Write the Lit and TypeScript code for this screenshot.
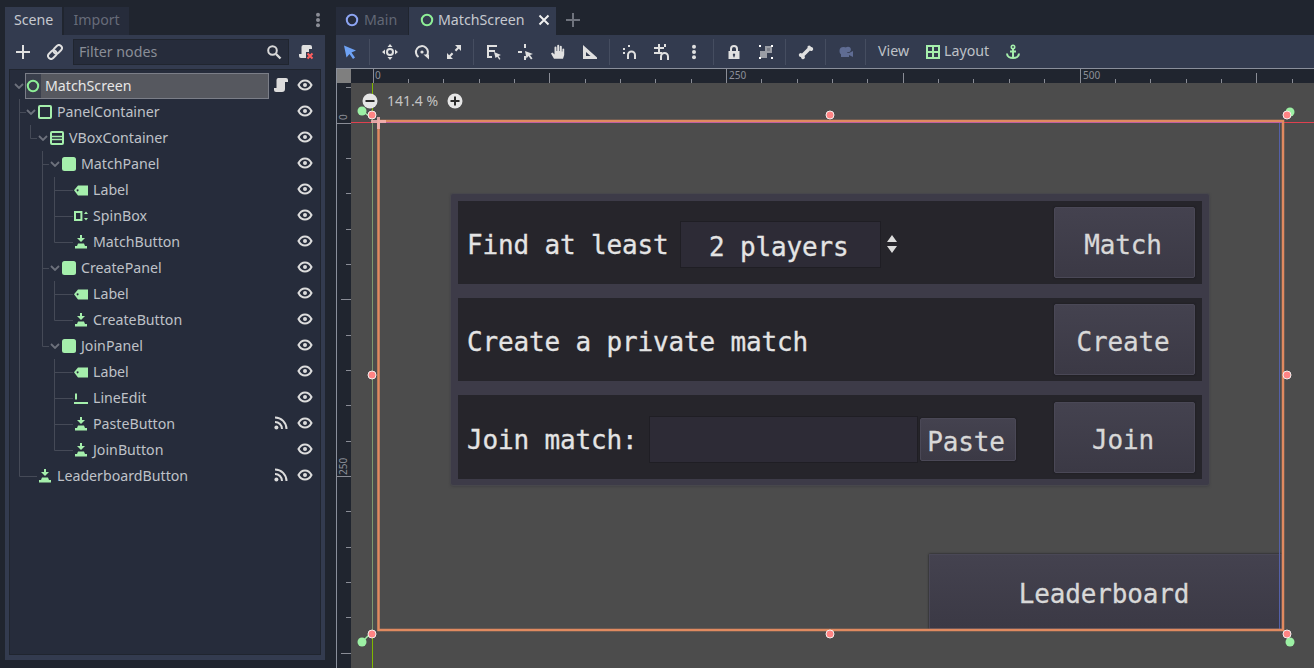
import { LitElement, css, html, svg } from "lit";
import { customElement } from "lit/decorators.js";

// icons are all on a 16x16 grid, colour comes from currentColor
const icons: Record<string, unknown> = {
  ring: svg`<circle cx="8" cy="8" r="5.2" fill="none" stroke="currentColor" stroke-width="2"/>`,
  box: svg`<rect x="2" y="2" width="12" height="12" rx="1" fill="none" stroke="currentColor" stroke-width="2"/>`,
  vbox: svg`<rect x="2" y="2" width="12" height="12" rx="1" fill="none" stroke="currentColor" stroke-width="2"/><path d="M2 6.500h12M2 9.500h12" stroke="currentColor" stroke-width="1.600"/>`,
  panel: svg`<rect x="1" y="1" width="14" height="14" rx="2.500" fill="currentColor"/>`,
  label: svg`<path fill-rule="evenodd" fill="currentColor" d="M1 8.200 5 3.500h10v10H5zM4.600 7.300a1 1 0 1 0 .01 0z"/>`,
  spin: svg`<rect x="2" y="4" width="6.400" height="8" fill="none" stroke="currentColor" stroke-width="2"/><path fill="currentColor" d="M13 3.500l2 2.500h-4zM13 12.500l-2-2.500h4z"/>`,
  edit: svg`<path fill="currentColor" d="M2 3.500h2v6H2zM1 12h14v2H1z"/>`,
  button: svg`<path fill="currentColor" d="M7 1h2v3h3L8 8 4 4h3zM5 9.500h6l1 2.500h2v2.500H2V12h2z"/>`,
  eye: svg`<path fill="none" stroke="currentColor" stroke-width="2" d="M1.500 8C3 5 5.300 3.400 8 3.400S13 5 14.500 8C13 11 10.700 12.600 8 12.600S3 11 1.500 8Z"/><circle cx="8" cy="8" r="2" fill="currentColor"/>`,
  signal: svg`<circle cx="3.400" cy="12.600" r="2" fill="currentColor"/><path fill="none" stroke="currentColor" stroke-width="2" d="M2 7a7 7 0 0 1 7 7M2 2.500A11.500 11.500 0 0 1 13.500 14"/>`,
  script: svg`<path fill="currentColor" d="M5 1h8a2 2 0 0 1 2 2v2h-3v7a3 3 0 0 1-3 3H3a2 2 0 0 1-2-2v-2h2.500V3A2 2 0 0 1 5 1z"/>`,
  scriptX: svg`<path fill="currentColor" d="M5 1h7a2 2 0 0 1 2 2v2h-3v3H8v6H3a2 2 0 0 1-2-2v-2h2.500V3A2 2 0 0 1 5 1z"/><path stroke="#ff5f5f" stroke-width="2" d="M9.500 9.500l5 5M14.500 9.500l-5 5"/>`,
  plus: svg`<path fill="currentColor" d="M7 1h2v6h6v2H9v6H7V9H1V7h6z"/>`,
  link: svg`<g transform="rotate(-45 8 8)" fill="none" stroke="currentColor" stroke-width="1.900"><rect x="-0.500" y="5" width="9.500" height="6" rx="3"/><rect x="7" y="5" width="9.500" height="6" rx="3"/></g>`,
  search: svg`<circle cx="6.500" cy="6.500" r="4.300" fill="none" stroke="currentColor" stroke-width="2"/><path stroke="currentColor" stroke-width="2.400" d="M10 10l4.500 4.500"/>`,
  select: svg`<path fill="currentColor" d="M2 1.500l12 5-4.500 2 3.500 5-2 1.500-3.500-5L4.500 13.500z"/>`,
  move: svg`<path fill="currentColor" d="M8 0l2.500 3h-5zM8 16l-2.500-3h5zM0 8l3-2.500v5zM16 8l-3 2.500v-5z"/><circle cx="8" cy="8" r="3" fill="none" stroke="currentColor" stroke-width="2"/>`,
  rotate: svg`<path fill="none" stroke="currentColor" stroke-width="2" d="M4.500 13A6 6 0 1 1 12.500 12"/><circle cx="8" cy="8" r="1.600" fill="currentColor"/><path fill="currentColor" d="M9.500 10.500h5.500v5z"/>`,
  scale: svg`<path fill="currentColor" d="M9 1h6v6l-2.200-2.200-2.600 2.600-1.500-1.500 2.600-2.600zM7 15H1V9l2.200 2.200 2.600-2.600 1.500 1.500-2.600 2.600z"/>`,
  listSelect: svg`<path fill="currentColor" d="M1 1h10v2H3v3h6v2H3v4h3v2H1z"/><path fill="currentColor" d="M8 8l7 3-2.500 1 2 3-1.200.8-2-3L9.500 14z"/>`,
  pivot: svg`<path fill="currentColor" d="M0 7h4v2H0zM6 0h2v4H6zM6 12h2v4H6z"/><path fill="currentColor" d="M7 7l8 3-3 1 2.500 3.500-1.500 1-2.500-3.500-2 2.500z"/>`,
  hand: svg`<path fill="currentColor" d="M4 14.800L1 9.500l1.500-1 2 2V3.500a1 1 0 0 1 2 0V7h.7V1.800a1 1 0 0 1 2 0V7h.6V2.800a1 1 0 0 1 2 0V7.500h.6V5a1 1 0 0 1 1.800 0V11l-1.200 3.800z"/>`,
  triangle: svg`<path fill-rule="evenodd" fill="currentColor" d="M1 1l14 12.500V15H1zM4 8v4h4.500z"/>`,
  snap: svg`<path fill="none" stroke="currentColor" stroke-width="2" d="M6 15v-4a3.500 3.500 0 0 1 7 0v4"/><path fill="currentColor" d="M1 4h2v2H1zM6 1h2v2H6zM1 8h2v2H1z"/>`,
  gridSnap: svg`<path fill="currentColor" d="M4 0h2v9H4zM0 3h10v2H0zM0 8h8v2H0zM10 0h2v3h-2z"/><path fill="none" stroke="currentColor" stroke-width="2" d="M7 16v-3.500a3.500 3.500 0 0 1 7 0V16"/>`,
  dots: svg`<circle cx="8" cy="2.800" r="2" fill="currentColor"/><circle cx="8" cy="8" r="2" fill="currentColor"/><circle cx="8" cy="13.200" r="2" fill="currentColor"/>`,
  lock: svg`<path fill="currentColor" fill-rule="evenodd" d="M4 7V5a4 4 0 0 1 8 0v2h1.500v8h-11V7zM6 7h4V5a2 2 0 0 0-4 0zM8 9.500a1.300 1.300 0 0 0-.6 2.400v1.300h1.200v-1.300A1.300 1.300 0 0 0 8 9.500z"/>`,
  group: svg`<path fill="#9a9da5" d="M2 7h7v7H2zM7 2h7v7H9V7H7z"/><path fill="#7b7e88" d="M9 4h3v3H9z"/><path fill="#fff" d="M1 1h2v2H1zM13 1h2v2h-2zM1 13h2v2H1zM13 13h2v2h-2z"/>`,
  bone: svg`<path fill="currentColor" d="M11 1.500a2 2 0 0 1 2 1.500 2 2 0 0 1 1.500 3.500 2 2 0 0 1-2.500 0L6.500 12a2 2 0 0 1 0 2.500A2 2 0 0 1 3 13a2 2 0 0 1-1.500-3.500 2 2 0 0 1 2.500 0L9.500 4a2 2 0 0 1 1.500-2.500z"/>`,
  camera: svg`<circle cx="5.500" cy="7" r="4" fill="currentColor"/><circle cx="10" cy="5.500" r="2.800" fill="currentColor"/><path fill="currentColor" d="M3 9h8v4H3zM11 9l4-2v6l-4-2z"/>`,
  layout: svg`<path fill-rule="evenodd" fill="currentColor" d="M1 1h14v14H1zM3 3v4h4V3zM9 3v4h4V3zM3 9v4h4V9zM9 9v4h4V9z"/>`,
  anchor: svg`<circle cx="8" cy="3" r="1.700" fill="none" stroke="currentColor" stroke-width="1.600"/><path fill="none" stroke="currentColor" stroke-width="2" d="M8 5v9M5 7.500h6M2 9.500c0 3 3 4.500 6 4.500s6-1.500 6-4.500"/>`,
  minus: svg`<circle cx="8" cy="8" r="7.500" fill="#e6e6e6"/><path d="M3.500 7h9v2h-9z" fill="#2b2b2b"/>`,
  zoomIn: svg`<circle cx="8" cy="8" r="7.500" fill="#e6e6e6"/><path d="M7 3.500h2V7h3.500v2H9v3.500H7V9H3.500V7H7z" fill="#2b2b2b"/>`,
  close: svg`<path stroke="currentColor" stroke-width="2.600" d="M2 2l12 12M14 2L2 14"/>`,
  plusThin: svg`<path stroke="currentColor" stroke-width="2" d="M8 1v14M1 8h14"/>`,
};

const icon = (name: string, size = 16) =>
  html`<svg class="ico" width=${size} height=${size} viewBox="0 0 16 16">${icons[name]}</svg>`;

interface TreeRow {
  depth: number;
  name: string;
  icon: string;
  open?: boolean;
  signal?: boolean;
}

const rows: TreeRow[] = [
  { depth: 0, name: "MatchScreen", icon: "ring", open: true },
  { depth: 1, name: "PanelContainer", icon: "box", open: true },
  { depth: 2, name: "VBoxContainer", icon: "vbox", open: true },
  { depth: 3, name: "MatchPanel", icon: "panel", open: true },
  { depth: 4, name: "Label", icon: "label" },
  { depth: 4, name: "SpinBox", icon: "spin" },
  { depth: 4, name: "MatchButton", icon: "button" },
  { depth: 3, name: "CreatePanel", icon: "panel", open: true },
  { depth: 4, name: "Label", icon: "label" },
  { depth: 4, name: "CreateButton", icon: "button" },
  { depth: 3, name: "JoinPanel", icon: "panel", open: true },
  { depth: 4, name: "Label", icon: "label" },
  { depth: 4, name: "LineEdit", icon: "edit" },
  { depth: 4, name: "PasteButton", icon: "button", signal: true },
  { depth: 4, name: "JoinButton", icon: "button" },
  { depth: 1, name: "LeaderboardButton", icon: "button", signal: true },
];

// connector lines of the tree, in page coordinates
const treeLines = [
  "M19.500 99V476.500H37",
  "M19.500 112.500H26",
  "M30.500 125V138.500H37",
  "M42.500 151V346.500H49",
  "M42.500 164.500H49",
  "M42.500 268.500H49",
  "M54.500 177V242.500H73",
  "M54.500 190.500H73",
  "M54.500 216.500H73",
  "M54.500 281V320.500H73",
  "M54.500 294.500H73",
  "M54.500 359V450.500H73",
  "M54.500 372.500H73",
  "M54.500 398.500H73",
  "M54.500 424.500H73",
];

const tools: (string | null)[] = [
  "select", null, "move", "rotate", "scale", null, "listSelect", "pivot", "hand", "triangle", null,
  "snap", "gridSnap", "dots", null, "lock", "group", null, "bone", null, "camera", null,
];

const UNIT = 35.35;
const ticks = (from: number, to: number) => {
  const out: { at: number; kind: number }[] = [];
  for (let i = Math.ceil((from - 372) / UNIT); 372 + i * UNIT < to; i++) {
    const m = ((i % 10) + 10) % 10;
    out.push({ at: Math.round(372.5 + i * UNIT), kind: m === 0 ? 2 : m === 5 ? 1 : 0 });
  }
  return out;
};

@customElement("app-root")
export class AppRoot extends LitElement {
  static styles = css`
    :host {
      display: block;
      width: 1314px;
      height: 668px;
      overflow: hidden;
      background: #20252f;
      font-family: "Noto Sans", sans-serif;
      font-size: 14.2px;
      color: #bfc2c8;
    }
    .ico {
      display: block;
      flex: none;
    }
    .app {
      display: flex;
      height: 668px;
    }
    /* scene dock */
    .dock {
      width: 320px;
      margin: 7px 11px 8px 5px;
      display: flex;
      flex-direction: column;
      position: relative;
    }
    .tabs {
      display: flex;
      height: 28px;
      align-items: stretch;
      gap: 2px;
    }
    .tab {
      display: flex;
      align-items: center;
      padding: 0 9px 3px;
      background: #262c3b;
      color: #666b79;
    }
    .tab.on {
      background: #333b4f;
      color: #c6c9cf;
    }
    .tabs .more {
      margin-left: auto;
      margin-right: -1px;
      align-self: center;
      color: #8a8d96;
      margin-bottom: 2px;
    }
    .dock-body {
      flex: 1;
      background: #333b4f;
      display: flex;
      flex-direction: column;
      padding: 0 4px 5px;
    }
    .dock-tools {
      height: 34px;
      display: flex;
      align-items: center;
      color: #e0e0e0;
      flex: none;
    }
    .dock-tools .add {
      margin-left: 6px;
    }
    .dock-tools .link {
      margin-left: 16px;
    }
    .filter {
      margin-left: 10px;
      width: 216px;
      height: 26px;
      box-sizing: border-box;
      background: #262c3b;
      border: 1px solid #20252f;
      display: flex;
      align-items: center;
      justify-content: space-between;
      padding: 0 6px 0 5px;
      color: #8a8e97;
    }
    .filter span {
      margin-top: -2px;
    }
    .filter .ico {
      color: #d8d8d8;
    }
    .dock-tools .clear {
      margin-left: 9px;
    }
    .tree {
      flex: 1;
      background: #262c3b;
      border: 1px solid #20252f;
      box-sizing: border-box;
      padding-top: 3px;
      position: relative;
    }
    .tree-lines {
      position: absolute;
      left: -10px;
      top: -70px;
      pointer-events: none;
    }
    .row {
      height: 26px;
      display: flex;
      align-items: center;
      position: relative;
    }
    .chev {
      position: absolute;
      top: 10px;
      color: #6d717c;
    }
    .node-ico {
      position: absolute;
      color: #a5efac;
      top: 5px;
    }
    .row.root .node-ico {
      color: #8eef97;
    }
    .name {
      position: absolute;
      top: 2px;
      line-height: 22px;
      white-space: nowrap;
    }
    .row.root .name {
      color: #e6e6e6;
    }
    .sel {
      position: absolute;
      left: 15px;
      top: 0;
      width: 244px;
      height: 26px;
      box-sizing: border-box;
      border: 1px solid #7b7e88;
      background: linear-gradient(to right, #3a3f4c 15px, #56585f 15px);
    }
    .side {
      position: absolute;
      top: 4px;
      color: #dcdcdc;
    }
    .side.eye {
      left: 287px;
    }
    .side.extra {
      left: 263px;
    }
    /* main column */
    .main {
      flex: 1;
      min-width: 0;
      display: flex;
      flex-direction: column;
    }
    .doc-tabs {
      height: 28px;
      margin-top: 7px;
      display: flex;
      align-items: stretch;
      flex: none;
    }
    .doc-tab {
      display: flex;
      align-items: center;
      gap: 4px;
      padding: 0 8px 3px;
      background: #262c3b;
      color: #626775;
      width: 72px;
      box-sizing: border-box;
    }
    .doc-tab .ico {
      color: #8da5f3;
    }
    .doc-tab.on {
      background: #333b4f;
      color: #c6c9cf;
      width: 147px;
      margin-left: 1px;
      gap: 3px;
      padding: 0 6px 3px 10px;
    }
    .doc-tab.on .ico {
      color: #8eef97;
    }
    .doc-tab.on .x {
      margin-left: auto;
    }
    .doc-tab.on .x .ico {
      color: #f0f0f0;
    }
    .new-tab {
      margin-left: 9px;
      align-self: center;
      color: #6f737d;
      margin-bottom: 3px;
    }
    .toolbar {
      height: 34px;
      box-sizing: border-box;
      background: #333b4f;
      display: flex;
      align-items: center;
      flex: none;
      color: #e0e0e0;
      border-bottom: 1px solid #8a8f9b;
    }
    .tool {
      width: 32px;
      display: flex;
      justify-content: center;
      flex: none;
    }
    .tool.first {
      width: 28px;
      margin-right: 1.500px;
      color: #6ea2f5;
    }
    .tool.off {
      color: #5f6c93;
    }
    .sep {
      width: 1px;
      height: 26px;
      background: #454d60;
      flex: none;
      margin: 0 3.500px;
    }
    .txt {
      color: #bfc2c8;
      margin-left: 8.500px;
      margin-top: -2px;
    }
    .layout {
      display: flex;
      align-items: center;
      gap: 3px;
      color: #a5efac;
      margin-left: 16px;
    }
    .layout span {
      color: #bfc2c8;
      margin-top: -2px;
    }
    .anchor {
      color: #a5efac;
      margin-left: 16px;
    }
    .work {
      flex: 1;
      min-height: 0;
      display: grid;
      grid-template-columns: 14px 1fr;
      grid-template-rows: 14px 1fr;
      border-left: 1px solid #8a8f9b;
    }
    .corner {
      background: #7f7f7f;
    }
    .ruler {
      background: #20252f;
      display: block;
    }
    .ruler text {
      font-family: "Noto Sans", sans-serif;
      font-size: 10px;
      fill: #8d9099;
    }
    .canvas {
      background: #4c4c4c;
      position: relative;
      overflow: hidden;
    }
    .zoom {
      position: absolute;
      left: 11px;
      top: 10px;
      display: flex;
      align-items: center;
      color: #c4c4c4;
      gap: 9px;
      font-size: 14px;
      line-height: 16px;
    }
    /* the running game scene */
    .game {
      position: absolute;
      font-family: "DejaVu Sans Mono", monospace;
      font-size: 26px;
      letter-spacing: -0.150px;
      color: #e4e4e4;
      white-space: nowrap;
      -webkit-text-stroke: 0.300px currentColor;
    }
    .match {
      left: 100px;
      top: 111px;
      width: 758px;
      box-sizing: border-box;
      padding: 7px 7px 6px;
      background: #3d3b48;
      display: flex;
      flex-direction: column;
      gap: 14px;
      border-radius: 2px;
      box-shadow: 0 0 0 1px #47474c, 0 1px 3px #38383c;
    }
    .line {
      height: 83px;
      box-sizing: border-box;
      background: #26252b;
      padding: 6px 7px 6px 9px;
      display: flex;
      align-items: center;
    }
    .line.tall {
      height: 84px;
    }
    .line > span {
      padding-top: 5px;
    }
    .btn {
      box-sizing: border-box;
      display: flex;
      align-items: center;
      justify-content: center;
      padding: 5px 3px 0 0;
      background: linear-gradient(#44424f, #3b3945);
      border: 1px solid #4a4856;
      border-radius: 2px;
      box-shadow: 0 0 2px #18181c;
      color: #d8d8d8;
    }
    .action {
      margin-left: auto;
      width: 141px;
      height: 71px;
    }
    .field {
      box-sizing: border-box;
      background: #2d2b36;
      border: 1px solid #1f1e24;
      height: 47px;
      display: flex;
      align-items: center;
      margin-top: 3px;
    }
    .spin {
      width: 201px;
      margin-left: 11.500px;
      padding: 5px 0 0 28px;
    }
    .arrows {
      margin: 3px 0 0 4px;
      color: #dcdcdc;
    }
    .edit {
      width: 269px;
      margin-left: 11px;
      margin-top: 5px;
    }
    .paste {
      width: 96px;
      height: 43px;
      margin: 5px 0 0 2px;
    }
    .board {
      left: 578px;
      top: 471px;
      width: 353px;
      height: 75px;
      border-radius: 0;
    }
    .gizmos {
      position: absolute;
      left: 0;
      top: 0;
      pointer-events: none;
    }
  `;

  private renderTree() {
    return rows.map((r, i) => {
      const root = i === 0;
      return html`<div class="row ${root ? "root" : ""}">
        ${root ? html`<div class="sel"></div>` : null}
        ${r.open
          ? html`<svg class="chev" style="left:${4 + 12 * r.depth}px" width="10" height="6" viewBox="0 0 10 6">
              <path d="M1 1l4 4 4-4" fill="none" stroke="currentColor" stroke-width="1.800" />
            </svg>`
          : null}
        <div class="node-ico" style="left:${15 + 12 * r.depth}px">${icon(r.icon)}</div>
        <div class="name" style="left:${35 + 12 * r.depth}px">${r.name}</div>
        ${root ? html`<div class="side extra">${icon("script")}</div>` : null}
        ${r.signal ? html`<div class="side extra">${icon("signal")}</div>` : null}
        <div class="side eye">${icon("eye")}</div>
      </div>`;
    });
  }

  private renderTopRuler() {
    return svg`${ticks(351, 1314).map((t) => {
      const y = t.kind === 2 ? 69 : t.kind === 1 ? 73 : 79;
      return svg`<path d="M${t.at + 0.5} ${y}V83" stroke="#8a8d96"/>`;
    })}
      <text x="375" y="79">0</text>
      <text x="729" y="79">250</text>
      <text x="1083" y="79">500</text>`;
  }

  private renderLeftRuler() {
    const rel = ticks(351, 351 + 585);
    return svg`${rel.map((t) => {
      const y = t.at - 372 + 122;
      if (y < 83) return null;
      const x = t.kind === 2 ? 337 : t.kind === 1 ? 341 : 346;
      return svg`<path d="M${x} ${y + 0.5}H351" stroke="#8a8d96"/>`;
    })}
      ${[87].map((y) => svg`<path d="M346 ${y + 0.5}H351" stroke="#8a8d96"/>`)}
      <text transform="translate(347 120) rotate(-90)">0</text>
      <text transform="translate(347 475) rotate(-90)">250</text>`;
  }

  private renderGizmos() {
    const handles = [
      [372, 115], [830, 115], [1287, 115],
      [372, 375], [1287, 375],
      [372, 634], [830, 634], [1287, 634],
    ];
    const pins = [
      [362, 111, 372, 118], [1290, 112, 1285, 118],
      [362, 642, 372, 632], [1290, 642, 1285, 632],
    ];
    return svg`
      <path d="M372.500 83V115M372.500 634V668" stroke="#7fb800" />
      <path d="M372.500 115V634" stroke="#7d9a70" />
      <path d="M351 122.500H1314" stroke="#e0404f" />
      <rect x="1279" y="122" width="1" height="507" fill="#5560a8" />
      <rect x="378.500" y="121" width="904.500" height="509" fill="none" stroke="#e08a60" stroke-width="2.500" />
      <path d="M379 122.500H1282" stroke="#c05fa0" />
      <path d="M378.500 117V129M371 121.500H386" stroke="#f5b4b4" stroke-width="3" opacity="0.85" />
      ${pins.map(
        ([x1, y1, x2, y2]) => svg`<path d="M${x1} ${y1}L${x2} ${y2}" stroke="#9cf0a4" stroke-width="1.500"/>
          <circle cx=${x1} cy=${y1} r="4.500" fill="#9cf0a4"/>`
      )}
      ${handles.map(
        ([x, y]) => svg`<circle cx=${x} cy=${y} r="4" fill="#ff8484" stroke="#f4eeee" stroke-width="1"/>`
      )}
    `;
  }

  render() {
    return html`<div class="app">
      <section class="dock">
        <div class="tabs">
          <div class="tab on">Scene</div>
          <div class="tab">Import</div>
          <div class="more">${icon("dots")}</div>
        </div>
        <div class="dock-body">
          <div class="dock-tools">
            <span class="add">${icon("plus")}</span>
            <span class="link">${icon("link")}</span>
            <div class="filter"><span>Filter nodes</span>${icon("search")}</div>
            <span class="clear">${icon("scriptX")}</span>
          </div>
          <div class="tree">
            <svg class="tree-lines" width="320" height="500" viewBox="0 0 320 500">
              <path d=${treeLines.join("")} fill="none" stroke="#454a57" />
            </svg>
            ${this.renderTree()}
          </div>
        </div>
      </section>

      <section class="main">
        <div class="doc-tabs">
          <div class="doc-tab">${icon("ring")}<span>Main</span></div>
          <div class="doc-tab on">${icon("ring")}<span>MatchScreen</span><span class="x">${icon("close", 12)}</span></div>
          <div class="new-tab">${icon("plusThin")}</div>
        </div>
        <div class="toolbar">
          ${tools.map((t, i) =>
            t === null
              ? html`<div class="sep"></div>`
              : html`<div class="tool ${i === 0 ? "first" : ""} ${t === "camera" ? "off" : ""}">${icon(t)}</div>`
          )}
          <span class="txt">View</span>
          <div class="layout">${icon("layout")}<span>Layout</span></div>
          <div class="anchor">${icon("anchor")}</div>
        </div>
        <div class="work">
          <div class="corner"></div>
          <svg class="ruler" width="963" height="14" viewBox="351 69 963 14">${this.renderTopRuler()}</svg>
          <svg class="ruler" width="14" height="585" viewBox="337 83 14 585">${this.renderLeftRuler()}</svg>
          <div class="canvas">
            <div class="game match">
              <div class="line">
                <span>Find at least</span>
                <div class="field spin">2 players</div>
                <svg class="arrows" width="14" height="22" viewBox="0 0 14 22">
                  <path fill="currentColor" d="M7 2l5 7H2zM7 20l-5-7h10z" />
                </svg>
                <div class="btn action">Match</div>
              </div>
              <div class="line">
                <span>Create a private match</span>
                <div class="btn action">Create</div>
              </div>
              <div class="line tall">
                <span>Join match:</span>
                <div class="field edit"></div>
                <div class="btn paste">Paste</div>
                <div class="btn action">Join</div>
              </div>
            </div>
            <div class="game btn board">Leaderboard</div>
            <svg class="gizmos" width="963" height="585" viewBox="351 83 963 585">${this.renderGizmos()}</svg>
            <div class="zoom">
              ${icon("minus")}<span>141.4 %</span>${icon("zoomIn")}
            </div>
          </div>
        </div>
      </section>
    </div>`;
  }
}
